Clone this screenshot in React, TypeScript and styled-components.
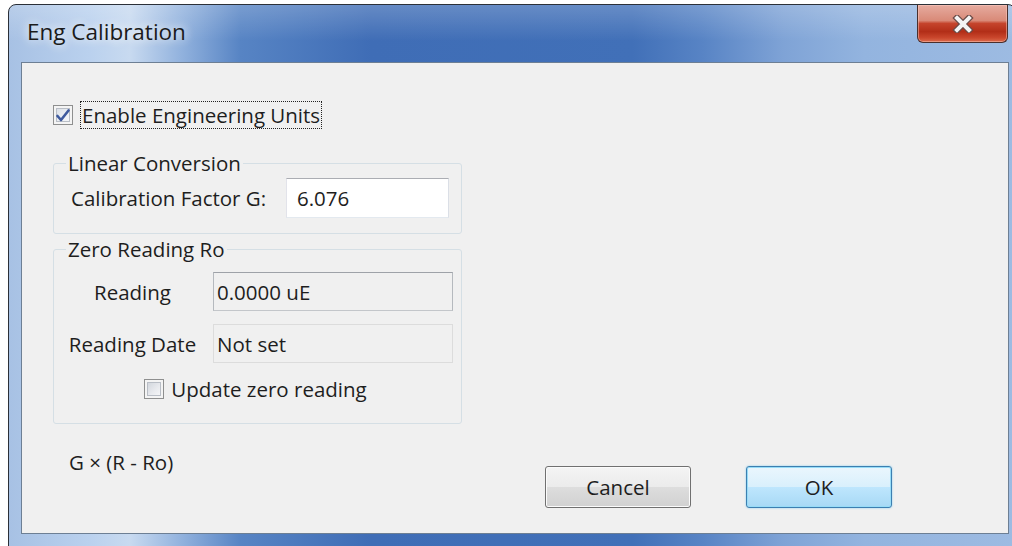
import React from "react";
import styled, { createGlobalStyle } from "styled-components";

const GlobalStyle = createGlobalStyle`
  html, body {
    margin: 0;
    padding: 0;
    background: #ffffff;
    overflow: hidden;
  }
  body {
    font-family: "Open Sans", "Noto Sans", sans-serif;
    font-size: 20.5px;
    color: #1e1e1e;
  }
`;

const Window = styled.div`
  box-sizing: border-box;
  width: 1008px;
  height: 544px;
  margin: 4px 0 0 8px;
  display: flex;
  flex-direction: column;
  border: 1px solid #2b3038;
  border-radius: 8px 8px 0 0;
  background:
    linear-gradient(to bottom, rgba(255, 255, 255, 0.2), rgba(255, 255, 255, 0) 36px),
    linear-gradient(
      to right,
      #a7c1e4 0%,
      #bad1ee 8%,
      #c8daf0 12%,
      #93b3de 17%,
      #5784c4 23%,
      #3f6db6 36%,
      #4170b8 62%,
      #5884c5 69%,
      #7fa3d6 77%,
      #93b4df 85%,
      #9dbbe2 100%
    );
`;

const TitleBar = styled.div`
  height: 57px;
  display: flex;
  align-items: flex-start;
  padding: 0 7px 0 18px;
`;

const Title = styled.span`
  margin-top: 13px;
  font-size: 22.5px;
  line-height: 28px;
  color: #1b1b1b;
  text-shadow: 0 0 8px rgba(255, 255, 255, 0.9), 0 0 14px rgba(255, 255, 255, 0.6);
`;

const CloseButton = styled.div`
  box-sizing: border-box;
  margin-left: auto;
  width: 91px;
  height: 38px;
  display: flex;
  align-items: center;
  justify-content: center;
  border: 1px solid #4a2f2c;
  border-top: none;
  border-radius: 0 0 6px 6px;
  background: linear-gradient(
    to bottom,
    #e6ab9f 0%,
    #d98a78 42%,
    #c5442c 50%,
    #b22e18 72%,
    #c9462c 88%,
    #db6a4c 100%
  );
  box-shadow: inset 0 0 0 1px rgba(255, 210, 200, 0.45);
`;

const Client = styled.div`
  box-sizing: border-box;
  flex: 1;
  margin: 0 6px 13px 12px;
  padding: 0 116px 0 31px;
  display: flex;
  flex-direction: column;
  border: 1px solid #6d7f94;
  background: #f0f0f0;
`;

const CheckRow = styled.div<{ $center?: boolean }>`
  display: flex;
  align-items: center;
  gap: 7px;
  justify-content: ${(p) => (p.$center ? "center" : "flex-start")};
`;

const TopCheck = styled(CheckRow)`
  margin-top: 38px;
`;

const Box = styled.span<{ $checked?: boolean }>`
  box-sizing: border-box;
  width: 20px;
  height: 20px;
  display: flex;
  align-items: center;
  justify-content: center;
  border: 1px solid #8e8f8f;
  background: ${(p) =>
    p.$checked
      ? "linear-gradient(135deg, #d4dae2 0%, #eef1f5 60%, #f7f8fa 100%)"
      : "linear-gradient(135deg, #c9ced6 0%, #e8eaee 55%, #fbfbfc 100%)"};
  box-shadow: inset 0 0 0 2px #f4f4f4, inset 0 0 0 3px #b9bec6;
`;

const FocusLabel = styled.span`
  padding: 0 1px;
  line-height: 26px;
  border: 1px dotted #222;
`;

const PlainLabel = styled.span`
  line-height: 28px;
`;

const Group = styled.fieldset`
  box-sizing: border-box;
  width: 409px;
  min-width: 0;
  margin: 0;
  padding: 0;
  border: 1px solid #d5dfe5;
  border-radius: 3px;
`;

const LinearGroup = styled(Group)`
  margin-top: 23px;
`;

const ZeroGroup = styled(Group)`
  margin-top: 4px;
`;

const Legend = styled.legend`
  margin-left: 12px;
  padding: 0 2px;
  line-height: 22px;
`;

const FactorBody = styled.div`
  display: grid;
  grid-template-columns: 215px 163px;
  align-items: center;
  padding: 4px 8px 15px 17px;
`;

const ZeroBody = styled.div`
  display: grid;
  grid-template-columns: 149px 240px;
  column-gap: 6px;
  row-gap: 13px;
  align-items: center;
  padding: 12px 8px 20px 4px;
`;

const FieldLabel = styled.span<{ $center?: boolean }>`
  text-align: ${(p) => (p.$center ? "center" : "left")};
  white-space: nowrap;
`;

const Field = styled.input<{ $tone: "edit" | "framed" | "flat" }>`
  box-sizing: border-box;
  width: 100%;
  height: ${(p) => (p.$tone === "edit" ? "40px" : "39px")};
  margin: 0;
  padding: 0 0 0 ${(p) => (p.$tone === "edit" ? "10px" : "3px")};
  font: inherit;
  color: #1e1e1e;
  outline: none;
  border: 1px solid;
  border-color: ${(p) =>
    p.$tone === "edit"
      ? "#abadb3 #dbdfe6 #e3e9ef #e2e3ea"
      : p.$tone === "framed"
      ? "#9ea2a8 #b5b9be #c3c6ca #b5b9be"
      : "#dcdcdc"};
  background: ${(p) => (p.$tone === "edit" ? "#ffffff" : "#f0f0f0")};
`;

const CheckSpan = styled(CheckRow)`
  grid-column: 1 / -1;
  margin-top: -1px;
`;

const Footer = styled.div`
  display: flex;
  align-items: flex-start;
`;

const Formula = styled.span`
  margin: 25px 0 0 16px;
  line-height: 26px;
`;

const ButtonRow = styled.div`
  margin: 42px 0 0 auto;
  display: flex;
  gap: 55px;
`;

const Button = styled.button<{ $primary?: boolean }>`
  box-sizing: border-box;
  width: 146px;
  height: 42px;
  padding: 0;
  font: inherit;
  color: #1e1e1e;
  border-radius: 3px;
  border: 1px solid ${(p) => (p.$primary ? "#3c7fb1" : "#707070")};
  background: ${(p) =>
    p.$primary
      ? "linear-gradient(to bottom, #eaf6fd 0%, #d9f0fc 50%, #bee6fd 51%, #a7d9f5 100%)"
      : "linear-gradient(to bottom, #f4f4f4 0%, #ebebeb 50%, #dddddd 51%, #d1d1d1 100%)"};
  box-shadow: ${(p) =>
    p.$primary
      ? "inset 0 0 0 1px #97dcf7, 0 0 2px #7ccbf0"
      : "inset 0 0 0 1px #fbfbfb"};
`;

const CheckMark = () => (
  <svg width="14" height="13" viewBox="0 0 14 13">
    <path
      d="M1.5 7 L5 11 L12.5 1.5"
      fill="none"
      stroke="#3e5a9e"
      strokeWidth="2.6"
      strokeLinecap="round"
      strokeLinejoin="round"
    />
  </svg>
);

const CloseGlyph = () => (
  <svg width="22" height="18" viewBox="0 0 22 18">
    <g strokeLinecap="square">
      <path d="M5 3 L17 15 M17 3 L5 15" stroke="#6a4a46" strokeWidth="6.5" />
      <path d="M5 3 L17 15 M17 3 L5 15" stroke="#f4f4f4" strokeWidth="4" />
    </g>
  </svg>
);

export default function App() {
  return (
    <>
      <GlobalStyle />
      <Window>
        <TitleBar>
          <Title>Eng Calibration</Title>
          <CloseButton>
            <CloseGlyph />
          </CloseButton>
        </TitleBar>
        <Client>
          <TopCheck>
            <Box $checked>
              <CheckMark />
            </Box>
            <FocusLabel>Enable Engineering Units</FocusLabel>
          </TopCheck>

          <LinearGroup>
            <Legend>Linear Conversion</Legend>
            <FactorBody>
              <FieldLabel>Calibration Factor G:</FieldLabel>
              <Field $tone="edit" defaultValue="6.076" />
            </FactorBody>
          </LinearGroup>

          <ZeroGroup>
            <Legend>Zero Reading Ro</Legend>
            <ZeroBody>
              <FieldLabel $center>Reading</FieldLabel>
              <Field $tone="framed" defaultValue="0.0000 uE" readOnly />
              <FieldLabel $center>Reading Date</FieldLabel>
              <Field $tone="flat" defaultValue="Not set" readOnly />
              <CheckSpan $center>
                <Box />
                <PlainLabel>Update zero reading</PlainLabel>
              </CheckSpan>
            </ZeroBody>
          </ZeroGroup>

          <Footer>
            <Formula>G × (R - Ro)</Formula>
            <ButtonRow>
              <Button>Cancel</Button>
              <Button $primary>OK</Button>
            </ButtonRow>
          </Footer>
        </Client>
      </Window>
    </>
  );
}
